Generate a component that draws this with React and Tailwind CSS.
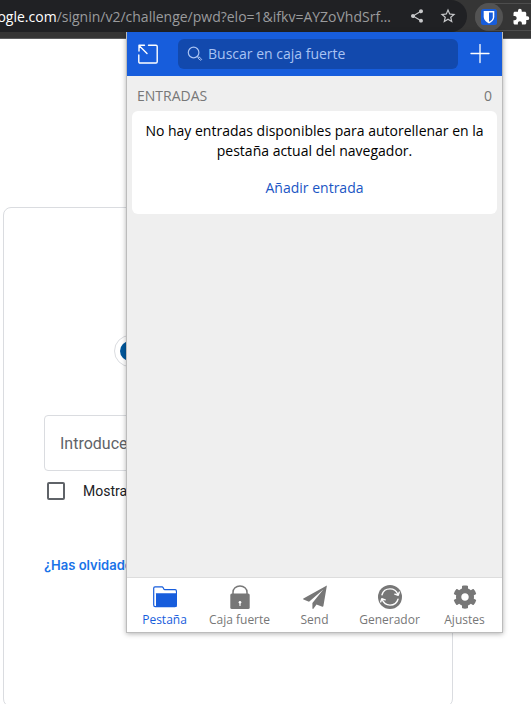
import React from "react";
import { MdShare, MdStarBorder, MdExtension } from "react-icons/md";
import { FaCog } from "react-icons/fa";

function ShieldIcon() {
  return (
    <svg viewBox="0 0 16 16" className="h-4 w-4 shrink-0">
      <rect width="16" height="16" rx="2.5" fill="#175ddc" />
      <path d="M2.7 1.9h10.6v6.2c0 3-2.5 5-5.3 6.3-2.8-1.3-5.3-3.3-5.3-6.3z" fill="#fff" />
      <path d="M8 3.4h3.8v4.8c0 2-1.7 3.5-3.8 4.6z" fill="#175ddc" />
    </svg>
  );
}

function PopOutIcon() {
  return (
    <svg viewBox="0 0 20 20" className="h-5 w-5" fill="none" stroke="currentColor" strokeWidth="1.4" strokeLinecap="round" strokeLinejoin="round">
      <path d="M10.500 1.200H18a1.200 1.200 0 0 1 1.200 1.200v15.400a1.200 1.200 0 0 1-1.200 1.200H2A1.200 1.200 0 0 1 .8 17.800V11" />
      <path d="M9 9.500L1 1.500M1 7V1.300h5.500" />
    </svg>
  );
}

function SearchIcon() {
  return (
    <svg viewBox="0 0 16 16" className="h-4 w-4 shrink-0" fill="none" stroke="currentColor" strokeLinecap="round" strokeLinejoin="round">
      <circle cx="6.600" cy="6.500" r="5.300" strokeWidth="1.200" />
      <path d="M10.400 10.300l1 .9M11 11.600l.8-.8 2.700 2.200c.5.5-.6 1.700-1.200 1.200z" strokeWidth="1" />
    </svg>
  );
}

function PlusIcon() {
  return (
    <svg viewBox="0 0 20 20" className="h-5 w-5" fill="none" stroke="currentColor" strokeWidth="1.300" strokeLinecap="round">
      <path d="M10 .5v18M1 9.500h18" />
    </svg>
  );
}

function FolderIcon() {
  return (
    <svg viewBox="0 0 26 24" className="h-6 w-[26px]">
      <path d="M1.700 20V3.200c0-.8.5-1.300 1.300-1.300h7c.6 0 .9.300 1.200.8l.6 1.300c.2.500.5.700 1 .7h10.400c.7 0 1.200.5 1.200 1.200V20c0 1-.6 1.700-1.500 1.700H3.200c-.9 0-1.500-.7-1.500-1.700z" fill="none" stroke="currentColor" strokeWidth="1.200" />
      <path d="M3.600 8.200h21v13c0 .5-.4.900-1 .9H3.600z" fill="currentColor" />
      <path d="M3.500 21V8.400c0-.7.400-1 1-1h19.300" fill="none" stroke="#fff" strokeWidth="1" />
    </svg>
  );
}

function LockIcon() {
  return (
    <svg viewBox="0 0 24 24" className="h-6 w-6">
      <path d="M5 10V7.200C5 3.600 8 .9 12 .9s7 2.700 7 6.300V10" fill="none" stroke="currentColor" strokeWidth="1.500" />
      <rect x="2.300" y="8.500" width="19.400" height="15.500" rx="1.600" fill="currentColor" />
      <circle cx="12" cy="17.300" r="1.300" fill="#fff" />
      <path d="M12 17.500v3" stroke="#fff" strokeWidth="1.200" strokeLinecap="round" />
    </svg>
  );
}

function SendIcon() {
  return (
    <svg viewBox="0 0 24 24" className="h-6 w-6" fill="currentColor">
      <path d="M23.900.6L.4 13.500c-.5.300-.4.900.1 1.100l5.500 2.100L20.300 4.600 9.400 18v5.200c0 .7.800 1 1.200.4l2.900-4.200 5.800 2.300c.5.200 1-.1 1.100-.6z" />
    </svg>
  );
}

function GenerateIcon() {
  return (
    <svg viewBox="0 0 24 24" className="h-6 w-6" fill="none">
      <circle cx="12" cy="12" r="12" fill="currentColor" />
      <g stroke="#fff" strokeWidth="1.400" strokeLinecap="round" strokeLinejoin="round">
        <path d="M4 9.800C5 6.300 8.200 3.900 12 3.900c3.700 0 6.500 2 7.800 5.500" />
        <path d="M20 14.200c-1 3.500-4.200 5.900-8 5.900-3.700 0-6.500-2-7.800-5.500" />
        <path d="M16.800 9.200l3.400 1.100 1.100-3.200M7.200 14.800l-3.400-1.100-1.100 3.200" />
      </g>
    </svg>
  );
}

const tabs = [
  { label: "Pestaña", icon: <FolderIcon />, active: true },
  { label: "Caja fuerte", icon: <LockIcon /> },
  { label: "Send", icon: <SendIcon /> },
  { label: "Generador", icon: <GenerateIcon /> },
  { label: "Ajustes", icon: <FaCog className="h-6 w-6" /> },
];

function Toolbar() {
  return (
    <header className="flex h-[39px] shrink-0 items-start border-b border-[#5b5c5e] bg-[#353535]">
      <div className="flex h-8 min-w-0 flex-1 items-center rounded-r-2xl bg-[#202124]">
        <div className="flex min-w-0 flex-1 justify-end overflow-hidden pt-px font-['Open_Sans',sans-serif] text-[14px] leading-5 whitespace-nowrap text-[#9a9b9d]">
          <span className="text-white">google.com</span>
          <span>/signin/v2/challenge/pwd?elo=1&amp;ifkv=AYZoVhdSrf…</span>
        </div>
        <button aria-label="Compartir" className="ml-[18px] text-[#c7c8ca]">
          <MdShare className="h-4 w-4" />
        </button>
        <button aria-label="Favorito" className="mr-[10px] ml-[14px] text-[#c7c8ca]">
          <MdStarBorder className="h-[18px] w-[18px]" />
        </button>
      </div>
      <div className="mt-[3px] -mr-4 ml-2 flex h-7 w-[72px] shrink-0 items-center rounded-full border border-[#4d4d4d]">
        <button aria-label="Bitwarden" className="-ml-px flex h-7 w-7 items-center justify-center rounded-full bg-[#535353]">
          <ShieldIcon />
        </button>
        <button aria-label="Extensiones" className="ml-[9px] text-white">
          <MdExtension className="h-[18px] w-[18px]" />
        </button>
      </div>
    </header>
  );
}

function SignInCard() {
  return (
    <main className="flex-1 overflow-hidden bg-white pt-[168px] pr-[78px] pl-[3px] font-[Roboto,sans-serif]">
      <form className="flex h-[500px] flex-col rounded-lg border border-[#dadce0] px-10 pt-[127px]">
        <div className="flex h-8 w-[228px] shrink-0 items-center self-center rounded-full border border-[#dadce0] px-[5px]">
          <span className="h-5 w-5 rounded-full bg-[#01579b]" />
        </div>
        <input
          type="password"
          aria-label="Introduce tu contraseña"
          placeholder="Introduce tu contraseña"
          className="mt-12 h-14 shrink-0 rounded border border-[#dadce0] px-[15px] text-base placeholder:text-[#5f6368]"
        />
        <label className="mt-[10px] flex h-5 items-center gap-[18px] pl-[3px] text-sm text-[#202124]">
          <input type="checkbox" className="h-[18px] w-[18px] appearance-none rounded-xs border-2 border-[#5f6368]" />
          Mostrar contraseña
        </label>
        <a href="#recuperar" className="mt-[54px] font-[Inter,sans-serif] text-[13px] leading-5 font-semibold text-[#1a73e8]">
          ¿Has olvidado tu contraseña?
        </a>
      </form>
    </main>
  );
}

function VaultPopup() {
  return (
    <section className="absolute top-8 right-7 flex h-[601px] w-[377px] flex-col border border-t-0 border-[#bcbcbc] bg-[#efefef] font-['Open_Sans',sans-serif] shadow-[0_1px_5px_rgba(0,0,0,0.3)]">
      <div className="flex h-11 shrink-0 items-center bg-[#175ddc] pr-3 pl-[11px] text-white">
        <button aria-label="Abrir en ventana nueva">
          <PopOutIcon />
        </button>
        <label className="mr-3 ml-5 flex h-[30px] min-w-0 flex-1 items-center gap-[5px] rounded-md bg-[#1249ad] px-[9px] text-[#a9c3f3]">
          <SearchIcon />
          <input
            type="text"
            aria-label="Buscar en caja fuerte"
            placeholder="Buscar en caja fuerte"
            className="min-w-0 flex-1 text-sm outline-none placeholder:text-[#a9c3f3]"
          />
        </label>
        <button aria-label="Añadir">
          <PlusIcon />
        </button>
      </div>
      <div className="flex-1">
        <div className="flex justify-between px-[10px] pt-[10px] pb-[5px] text-sm text-[#777777]">
          <h2>ENTRADAS</h2>
          <span>0</span>
        </div>
        <div className="mx-[5px] rounded-md bg-white px-[10px] pt-[10px] pb-4 text-center text-sm">
          <p className="text-black">No hay entradas disponibles para autorellenar en la pestaña actual del navegador.</p>
          <button className="mt-[17px] text-[#1a55c4]">Añadir entrada</button>
        </div>
      </div>
      <nav className="grid h-[55px] shrink-0 grid-cols-5 border-t border-[#dddddd] bg-white">
        {tabs.map((tab) => (
          <button
            key={tab.label}
            className={
              tab.active
                ? "flex flex-col items-center pt-[7px] text-[#175ddc]"
                : "flex flex-col items-center pt-[7px] text-[#777777]"
            }
          >
            {tab.icon}
            <span className="mt-[3px] text-xs whitespace-nowrap">{tab.label}</span>
          </button>
        ))}
      </nav>
    </section>
  );
}

export default function App() {
  return (
    <div className="relative flex h-screen flex-col overflow-hidden">
      <Toolbar />
      <SignInCard />
      <VaultPopup />
    </div>
  );
}
